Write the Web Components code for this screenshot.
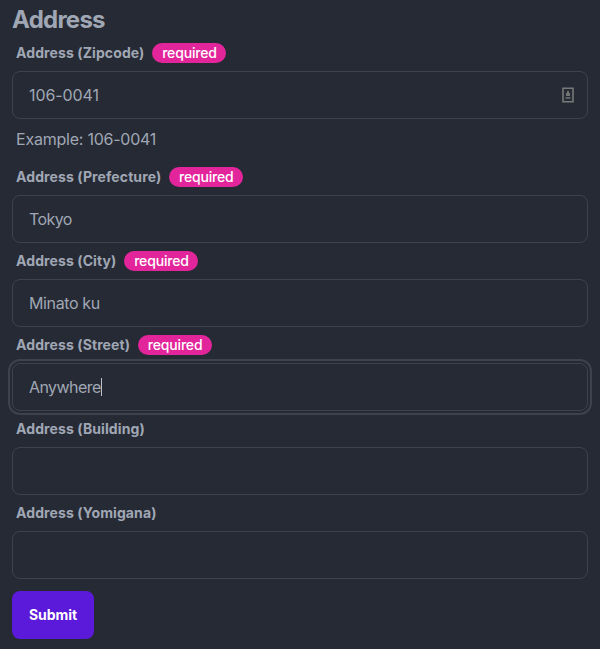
<!DOCTYPE html>
<html lang="en">
<head>
<meta charset="utf-8">
<title>Address</title>
<style>
html, body { margin: 0; background: #262a34; }
body { font-family: Inter, "Liberation Sans", sans-serif; color: #a0a7b4; height: 649px; overflow: hidden; }
</style>
</head>
<body>
<address-form></address-form>
<script>
class RequiredBadge extends HTMLElement {
  constructor() {
    super();
    this.attachShadow({ mode: 'open' }).innerHTML = `
      <style>
        :host { display: inline-flex; box-sizing: border-box; width: 74px; height: 20px; align-items: center; justify-content: center;
          border-radius: 10px; background: #e2259b; color: #fff; font-size: 14px; font-weight: 450; line-height: 20px; letter-spacing: -.17px; white-space: nowrap; }
      </style><slot></slot>`;
  }
}
customElements.define('required-badge', RequiredBadge);

class FillIcon extends HTMLElement {
  constructor() {
    super();
    this.attachShadow({ mode: 'open' }).innerHTML = `
      <style>:host { display: block; width: 12px; height: 16px; } svg { display: block; }</style>
      <svg width="12" height="16" viewBox="0 0 12 16" fill="none">
        <path d="M1 1.2h10v13.6H1z" stroke="#777976" stroke-width="1.6"/>
        <path d="M5 4h2v2h1v3H4V6h1z" fill="#70736f"/>
        <path d="M3.5 10h5v2h-5z" fill="#5c5f63"/>
      </svg>`;
  }
}
customElements.define('fill-icon', FillIcon);

class FormField extends HTMLElement {
  constructor() {
    super();
    this.attachShadow({ mode: 'open' }).innerHTML = `
      <style>
        :host { display: block; }
        .label { display: flex; align-items: center; height: 20px; padding: 8px 4px; gap: 8px; }
        .name { font-size: 14px; font-weight: 700; line-height: 20px; letter-spacing: .1px; white-space: nowrap; }
        .box { display: flex; align-items: center; box-sizing: border-box; height: 48px; padding: 0 13px 0 16px; border: 1px solid #3d424d; border-radius: 8px; }
        :host([focused]) .box { outline: 2px solid #3d424d; outline-offset: 2px; }
        .value { font-size: 16px; line-height: 24px; letter-spacing: var(--value-track, 0); white-space: nowrap; }
        .caret { width: 1px; height: 18px; background: #bcc2cd; }
        :host(:not([focused])) .caret { display: none; }
        ::slotted(fill-icon) { margin-left: auto; }
        .hint { display: block; padding: 8px 4px; font-size: 16px; line-height: 24px; letter-spacing: -.23px; }
        :host(:not([hint])) .hint { display: none; }
      </style>
      <div class="label"><span class="name"></span><slot name="badge"></slot></div>
      <div class="box"><span class="value"></span><span class="caret"></span><slot name="icon"></slot></div>
      <span class="hint"></span>`;
    for (const key of ['name', 'value', 'hint'])
      this.shadowRoot.querySelector('.' + key).textContent = this.getAttribute(key) || '';
  }
}

class SubmitButton extends HTMLElement {
  constructor() {
    super();
    this.attachShadow({ mode: 'open' }).innerHTML = `
      <style>
        :host { display: block; margin-top: 12px; }
        button { display: block; width: 82px; height: 48px; padding: 0; border: 0; border-radius: 8px; background: #5b19d9; color: #fff;
          font: 700 14px/14px Inter, "Liberation Sans", sans-serif; letter-spacing: -.05px; }
      </style><button type="button"><slot></slot></button>`;
  }
}
customElements.define('submit-button', SubmitButton);

class AddressForm extends HTMLElement {
  constructor() {
    super();
    this.attachShadow({ mode: 'open' }).innerHTML = `
      <style>
        :host { display: block; padding: 3px 12px 0; }
        h2 { margin: 0; padding-top: 1px; height: 31px; font-size: 24px; line-height: 32px; font-weight: 700; letter-spacing: -.74px; }
      </style>
      <h2>Address</h2>
      <form-field name="Address (Zipcode)" value="106-0041" hint="Example: 106-0041" style="--value-track:-.08px">
        <required-badge slot="badge">required</required-badge><fill-icon slot="icon"></fill-icon>
      </form-field>
      <form-field name="Address (Prefecture)" value="Tokyo" style="--value-track:-.6px"><required-badge slot="badge">required</required-badge></form-field>
      <form-field name="Address (City)" value="Minato ku" style="--value-track:-.38px"><required-badge slot="badge">required</required-badge></form-field>
      <form-field name="Address (Street)" value="Anywhere" style="--value-track:-.57px" focused><required-badge slot="badge">required</required-badge></form-field>
      <form-field name="Address (Building)"></form-field>
      <form-field name="Address (Yomigana)"></form-field>
      <submit-button>Submit</submit-button>`;
  }
}
customElements.define('form-field', FormField);
customElements.define('address-form', AddressForm);
</script>
</body>
</html>
